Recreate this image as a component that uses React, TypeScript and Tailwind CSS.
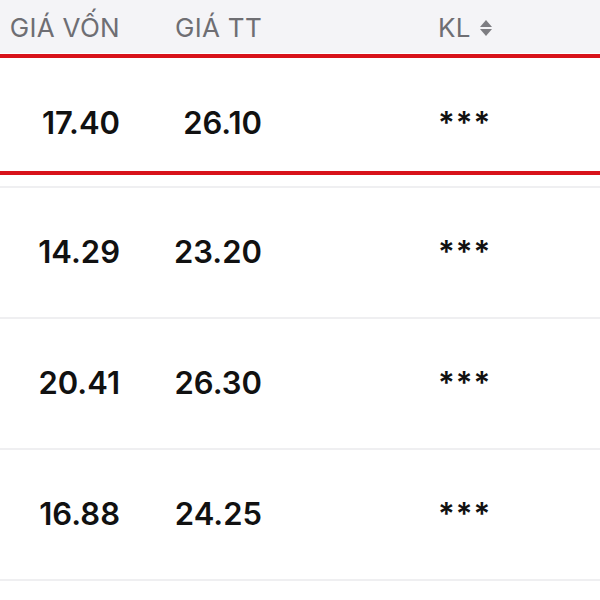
const rows = [
  { von: '14.29', tt: '23.20' },
  { von: '20.41', tt: '26.30' },
  { von: '16.88', tt: '24.25' },
];

function SortIcon() {
  return (
    <svg width="14" height="20" viewBox="0 0 14 20" className="ml-[8px]">
      <path d="M7 2 L13 9 L1 9 Z" fill="#7d7d82" />
      <path d="M7 18 L13 11 L1 11 Z" fill="#7d7d82" />
    </svg>
  );
}

function Cells({ von, tt }: { von: string; tt: string }) {
  return (
    <>
      <div className="w-[120px] text-right">{von}</div>
      <div className="w-[142px] text-right">{tt}</div>
      <div className="ml-[176px] tracking-[1px]">***</div>
    </>
  );
}

export default function App() {
  return (
    <div className="w-[600px] h-[600px] bg-white overflow-hidden font-['Inter',sans-serif]">
      {/* header */}
      <div className="h-[53px] bg-[#f4f4f7] flex items-center text-[26px] text-[#6e6e73] tracking-[0.3px]">
        <div className="w-[120px] text-right pt-[2px]">GIÁ VỐN</div>
        <div className="w-[142px] text-right pt-[2px]">GIÁ TT</div>
        <div className="ml-[176px] flex items-center pt-[2px]">
          KL
          <SortIcon />
        </div>
      </div>

      {/* selected row */}
      <div className="mt-px border-y-4 border-[#d8121a] h-[121px] flex items-center pt-[18px] text-[31px] font-semibold text-[#111]">
        <Cells von="17.40" tt="26.10" />
      </div>
      <div className="h-[13px] border-b-2 border-[#efeff1]" />

      {rows.map((r) => (
        <div
          key={r.von}
          className="h-[131px] border-b-2 border-[#efeff1] flex items-center text-[31px] font-semibold text-[#111]"
        >
          <Cells von={r.von} tt={r.tt} />
        </div>
      ))}
    </div>
  );
}
